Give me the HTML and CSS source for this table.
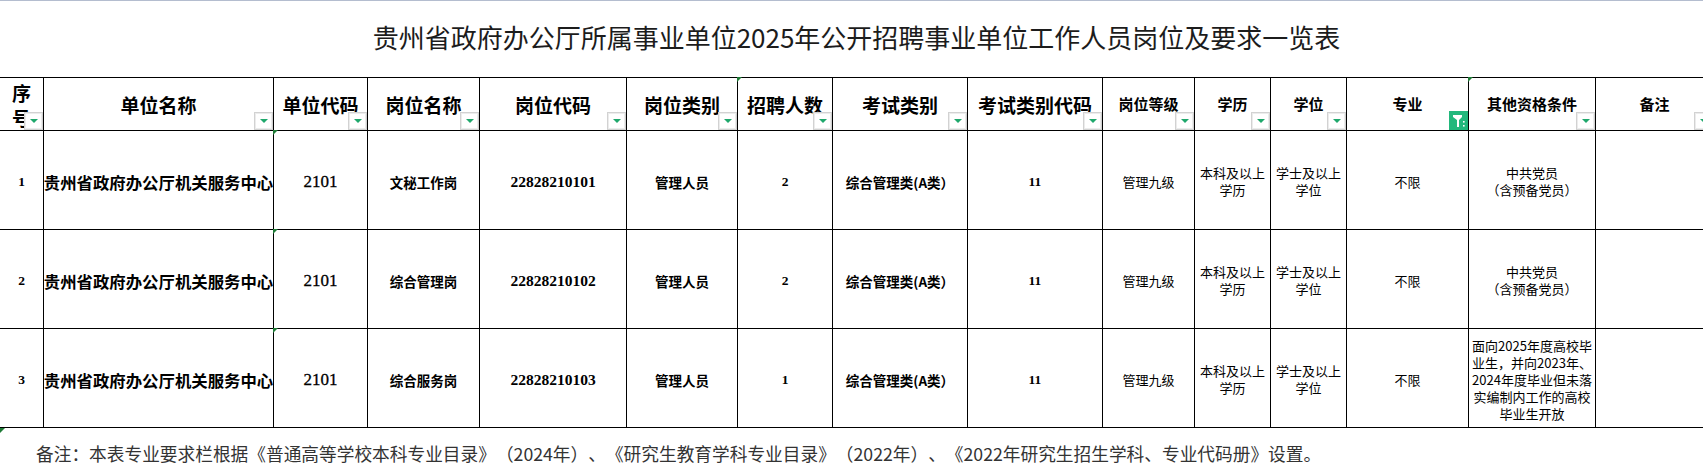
FILE: index.html
```html
<!DOCTYPE html>
<html lang="zh-CN">
<head>
<meta charset="utf-8">
<title>岗位及要求一览表</title>
<link rel="stylesheet" href="styles.css">
</head>
<body>
<div class="topline"></div>
<div class="sheet">
  <h1 class="title">贵州省政府办公厅所属事业单位2025年公开招聘事业单位工作人员岗位及要求一览表</h1>
  <div class="grid">
    <div class="cell head h-lg seq">序<br>号<span class="flt"></span></div>
    <div class="cell head h-lg">单位名称<span class="flt"></span></div>
    <div class="cell head h-lg">单位代码<span class="flt"></span></div>
    <div class="cell head h-lg">岗位名称<span class="flt"></span></div>
    <div class="cell head h-lg">岗位代码<span class="flt"></span></div>
    <div class="cell head h-lg">岗位类别<span class="flt"></span></div>
    <div class="cell head h-lg mark">招聘人数<span class="flt"></span></div>
    <div class="cell head h-lg">考试类别<span class="flt"></span></div>
    <div class="cell head h-lg">考试类别代码<span class="flt"></span></div>
    <div class="cell head h-sm">岗位等级<span class="flt"></span></div>
    <div class="cell head h-sm">学历<span class="flt"></span></div>
    <div class="cell head h-sm">学位<span class="flt"></span></div>
    <div class="cell head h-sm">专业<span class="flt on"><svg viewBox="0 0 19 19" width="19" height="19"><path d="M4 4h9v2l-3 3v7h-2v-7l-4-3z" fill="#fff"/><rect x="14" y="10" width="1.6" height="1.6" fill="#fff"/><rect x="14" y="14" width="1.6" height="1.6" fill="#fff"/></svg></span></div>
    <div class="cell head h-sm mark">其他资格条件<span class="flt"></span></div>
    <div class="cell head h-sm last">备注<span class="flt"></span></div>

    <div class="cell num">1</div>
    <div class="cell unit">贵州省政府办公厅机关服务中心</div>
    <div class="cell code mark">2101</div>
    <div class="cell b13">文秘工作岗</div>
    <div class="cell pcode">22828210101</div>
    <div class="cell b13">管理人员</div>
    <div class="cell num">2</div>
    <div class="cell b13">综合管理类(A类）</div>
    <div class="cell num">11</div>
    <div class="cell r13">管理九级</div>
    <div class="cell r13">本科及以上<br>学历</div>
    <div class="cell r13">学士及以上<br>学位</div>
    <div class="cell r13">不限</div>
    <div class="cell r13">中共党员<br>（含预备党员）</div>
    <div class="cell r13 last"></div>

    <div class="cell num">2</div>
    <div class="cell unit">贵州省政府办公厅机关服务中心</div>
    <div class="cell code mark">2101</div>
    <div class="cell b13">综合管理岗</div>
    <div class="cell pcode">22828210102</div>
    <div class="cell b13">管理人员</div>
    <div class="cell num">2</div>
    <div class="cell b13">综合管理类(A类）</div>
    <div class="cell num">11</div>
    <div class="cell r13">管理九级</div>
    <div class="cell r13">本科及以上<br>学历</div>
    <div class="cell r13">学士及以上<br>学位</div>
    <div class="cell r13">不限</div>
    <div class="cell r13">中共党员<br>（含预备党员）</div>
    <div class="cell r13 last"></div>

    <div class="cell num">3</div>
    <div class="cell unit">贵州省政府办公厅机关服务中心</div>
    <div class="cell code mark">2101</div>
    <div class="cell b13">综合服务岗</div>
    <div class="cell pcode">22828210103</div>
    <div class="cell b13">管理人员</div>
    <div class="cell num">1</div>
    <div class="cell b13">综合管理类(A类）</div>
    <div class="cell num">11</div>
    <div class="cell r13">管理九级</div>
    <div class="cell r13">本科及以上<br>学历</div>
    <div class="cell r13">学士及以上<br>学位</div>
    <div class="cell r13">不限</div>
    <div class="cell r13 cond">面向2025年度高校毕<br>业生，并向2023年、<br>2024年度毕业但未落<br>实编制内工作的高校<br>毕业生开放</div>
    <div class="cell r13 last"></div>
  </div>
  <p class="note mark">备注：本表专业要求栏根据《普通高等学校本科专业目录》（2024年）、《研究生教育学科专业目录》（2022年）、《2022年研究生招生学科、专业代码册》设置。</p>
</div>
</body>
</html>
```

FILE: styles.css
```css
html, body {
  margin: 0;
  padding: 0;
  overflow: hidden;
  background: #ffffff;
}

body {
  font-family: "Noto Sans CJK SC", "Noto Sans", sans-serif;
  color: #000;
  text-spacing-trim: space-all;
}

.topline {
  height: 1px;
  background: #b4bdcf;
}

.sheet {
  width: 1713px;
}

.title {
  margin: 0;
  height: 76px;
  box-sizing: border-box;
  padding-bottom: 6px;
  display: flex;
  align-items: center;
  justify-content: center;
  font-size: 26px;
  font-weight: 400;
  color: #1c1c1c;
}

.grid {
  display: grid;
  grid-template-columns: 44px 230px 94px 112px 147px 111px 95px 135px 135px 92px 76px 76px 122px 127px 117px;
  grid-template-rows: 53px 99px 99px 99px;
  border-top: 1px solid #000;
}

.cell {
  position: relative;
  box-sizing: border-box;
  border-right: 1px solid #000;
  border-bottom: 1px solid #000;
  display: flex;
  align-items: center;
  justify-content: center;
  text-align: center;
  white-space: nowrap;
  overflow: hidden;
}

.cell.last {
  border-right: none;
}

.head {
  font-weight: 700;
  overflow: visible;
}

.h-lg {
  font-size: 19px;
  line-height: 25px;
}

.h-sm {
  font-size: 15px;
  line-height: 20px;
}

.seq {
  line-height: 25px;
  padding-top: 2px;
}

.flt {
  position: absolute;
  right: 0;
  bottom: 0;
  width: 19px;
  height: 18px;
  box-sizing: border-box;
  background: #fff;
  border: 1px solid #d2d2d2;
  box-shadow: inset 0 0 0 1px #ececec;
  display: flex;
  align-items: center;
  justify-content: center;
  z-index: 2;
}

.flt::after {
  content: "";
  width: 0;
  height: 0;
  border-left: 4px solid transparent;
  border-right: 4px solid transparent;
  border-top: 4px solid #1fa86c;
}

.flt.on {
  width: 19px;
  height: 19px;
  background: #22b87c;
  border: none;
  box-shadow: none;
}

.flt.on::after {
  display: none;
}

.flt svg {
  display: block;
}

.mark::before {
  content: "";
  position: absolute;
  left: -1px;
  top: -1px;
  width: 0;
  height: 0;
  border-top: 5px solid #1e7b36;
  border-right: 5px solid transparent;
  z-index: 3;
}

.num {
  font-family: "Liberation Serif", serif;
  font-weight: 700;
  font-size: 13.5px;
  padding-top: 3px;
}

.unit {
  font-weight: 700;
  font-size: 16.4px;
  padding-top: 3px;
  overflow: hidden;
}

.code {
  font-family: "Liberation Serif", serif;
  font-size: 17px;
  padding-top: 3px;
  overflow: visible;
  color: #000;
  -webkit-text-stroke: 0.3px #000;
}

.pcode {
  font-family: "Liberation Serif", serif;
  font-weight: 700;
  font-size: 15.5px;
  padding-top: 3px;
}

.b13 {
  font-weight: 700;
  font-size: 13.5px;
  padding-top: 3px;
}

.r13 {
  font-size: 13px;
  line-height: 17px;
  padding-top: 2px;
}

.note {
  position: relative;
  margin: 0;
  padding: 13px 0 0 36px;
  font-size: 17.7px;
  line-height: 24px;
  color: #333;
}

.note.mark::before {
  left: 0;
  top: 0;
}
```
